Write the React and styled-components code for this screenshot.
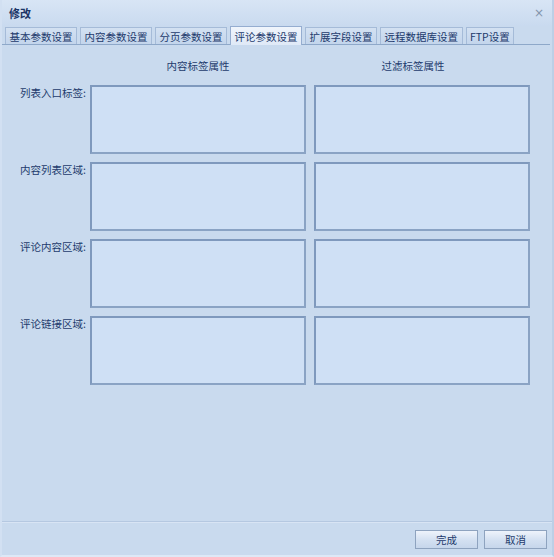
import React from "react"
import styled, { createGlobalStyle } from "styled-components"

const GlobalStyle = createGlobalStyle`
  html, body {
    margin: 0;
    padding: 0;
    background: #c9daee;
  }
  body {
    font-family: "Noto Sans CJK SC", "Liberation Sans", sans-serif;
  }
`

const TEXT = "#1d3a6c"
const LINE = "#8ea8c9"

const Window = styled.div`
  width: 554px;
  height: 557px;
  display: flex;
  flex-direction: column;
  background: #c9daee;
  box-sizing: border-box;
  border-left: 2px solid #d2e0f2;
  border-right: 2px solid #bccfe6;
  border-bottom: 2px solid #dde8f6;
  overflow: hidden;
`

const TitleBar = styled.div`
  height: 26px;
  display: flex;
  align-items: center;
  justify-content: space-between;
  padding: 0 8px 0 7px;
  background: linear-gradient(#d8e5f5, #c9daef);
`

const Title = styled.span`
  font-size: 11px;
  font-weight: bold;
  color: #1b3566;
`

const Close = styled.span`
  font-family: "DejaVu Sans", sans-serif;
  font-size: 12px;
  color: #8394ab;
`

const TabStrip = styled.div`
  display: flex;
  gap: 3px;
  align-items: flex-end;
  height: 18px;
  padding-left: 3px;
  margin-right: 2px;
  border-bottom: 1px solid ${LINE};
`

const Tab = styled.div`
  height: ${p => (p.$active ? "19px" : "17px")};
  margin-bottom: ${p => (p.$active ? "-1px" : "0")};
  box-sizing: border-box;
  padding: 0 3.5px;
  display: flex;
  align-items: center;
  font-size: 10.5px;
  color: ${TEXT};
  border: 1px solid ${p => (p.$active ? "#95add0" : "#a5bbd8")};
  border-bottom: none;
  background: ${p =>
    p.$active
      ? "linear-gradient(#f0f5fc, #dfe9f7)"
      : "linear-gradient(#d3e1f2, #c3d5ec)"};
`

const Body = styled.div`
  flex: 1;
  display: grid;
  grid-template-columns: 80px 216px 216px;
  grid-template-rows: 19px repeat(4, 69px);
  column-gap: 8px;
  row-gap: 8px;
  align-content: start;
  padding-top: 13px;
`

const HeaderRow = styled.div`
  grid-column: 1 / -1;
  display: grid;
  grid-template-columns: subgrid;
`

const Header = styled.div`
  font-size: 10.5px;
  color: ${TEXT};
  text-align: center;
  padding-right: ${p => p.$shift || 0}px;
`

const Label = styled.div`
  font-size: 10.5px;
  color: ${TEXT};
  padding-left: 18px;
  white-space: nowrap;
`

const Field = styled.textarea`
  box-sizing: border-box;
  width: 216px;
  height: 69px;
  margin: 0;
  resize: none;
  background: #cfe0f5;
  border: 2px solid #7f99bd;
  border-right-color: #8aa3c4;
  border-bottom-color: #8aa3c4;
  outline: none;
`

const Footer = styled.div`
  box-sizing: border-box;
  height: 34px;
  display: flex;
  justify-content: flex-end;
  align-items: flex-start;
  gap: 6px;
  padding: 8px 5px 0 0;
  border-top: 1px solid #b5c8e1;
  box-shadow: inset 0 1px 0 #d8e4f4;
`

const Button = styled.button`
  width: 63px;
  height: 19px;
  padding: 0;
  font-family: inherit;
  font-size: 10.5px;
  color: ${TEXT};
  border: 1px solid #8ea3bf;
  background: linear-gradient(#eef3fb, #d3e0f1 55%, #c6d6eb);
`

const tabs = [
  "基本参数设置",
  "内容参数设置",
  "分页参数设置",
  "评论参数设置",
  "扩展字段设置",
  "远程数据库设置",
  "FTP设置",
]

const rows = ["列表入口标签:", "内容列表区域:", "评论内容区域:", "评论链接区域:"]

export default function App() {
  return (
    <>
      <GlobalStyle />
      <Window>
        <TitleBar>
          <Title>修改</Title>
          <Close>×</Close>
        </TitleBar>
        <TabStrip>
          {tabs.map((t, i) => (
            <Tab key={t} $active={i === 3}>{t}</Tab>
          ))}
        </TabStrip>
        <Body>
          <HeaderRow>
            <span />
            <Header>内容标签属性</Header>
            <Header $shift={18}>过滤标签属性</Header>
          </HeaderRow>
          {rows.map(r => (
            <React.Fragment key={r}>
              <Label>{r}</Label>
              <Field />
              <Field />
            </React.Fragment>
          ))}
        </Body>
        <Footer>
          <Button>完成</Button>
          <Button>取消</Button>
        </Footer>
      </Window>
    </>
  )
}
